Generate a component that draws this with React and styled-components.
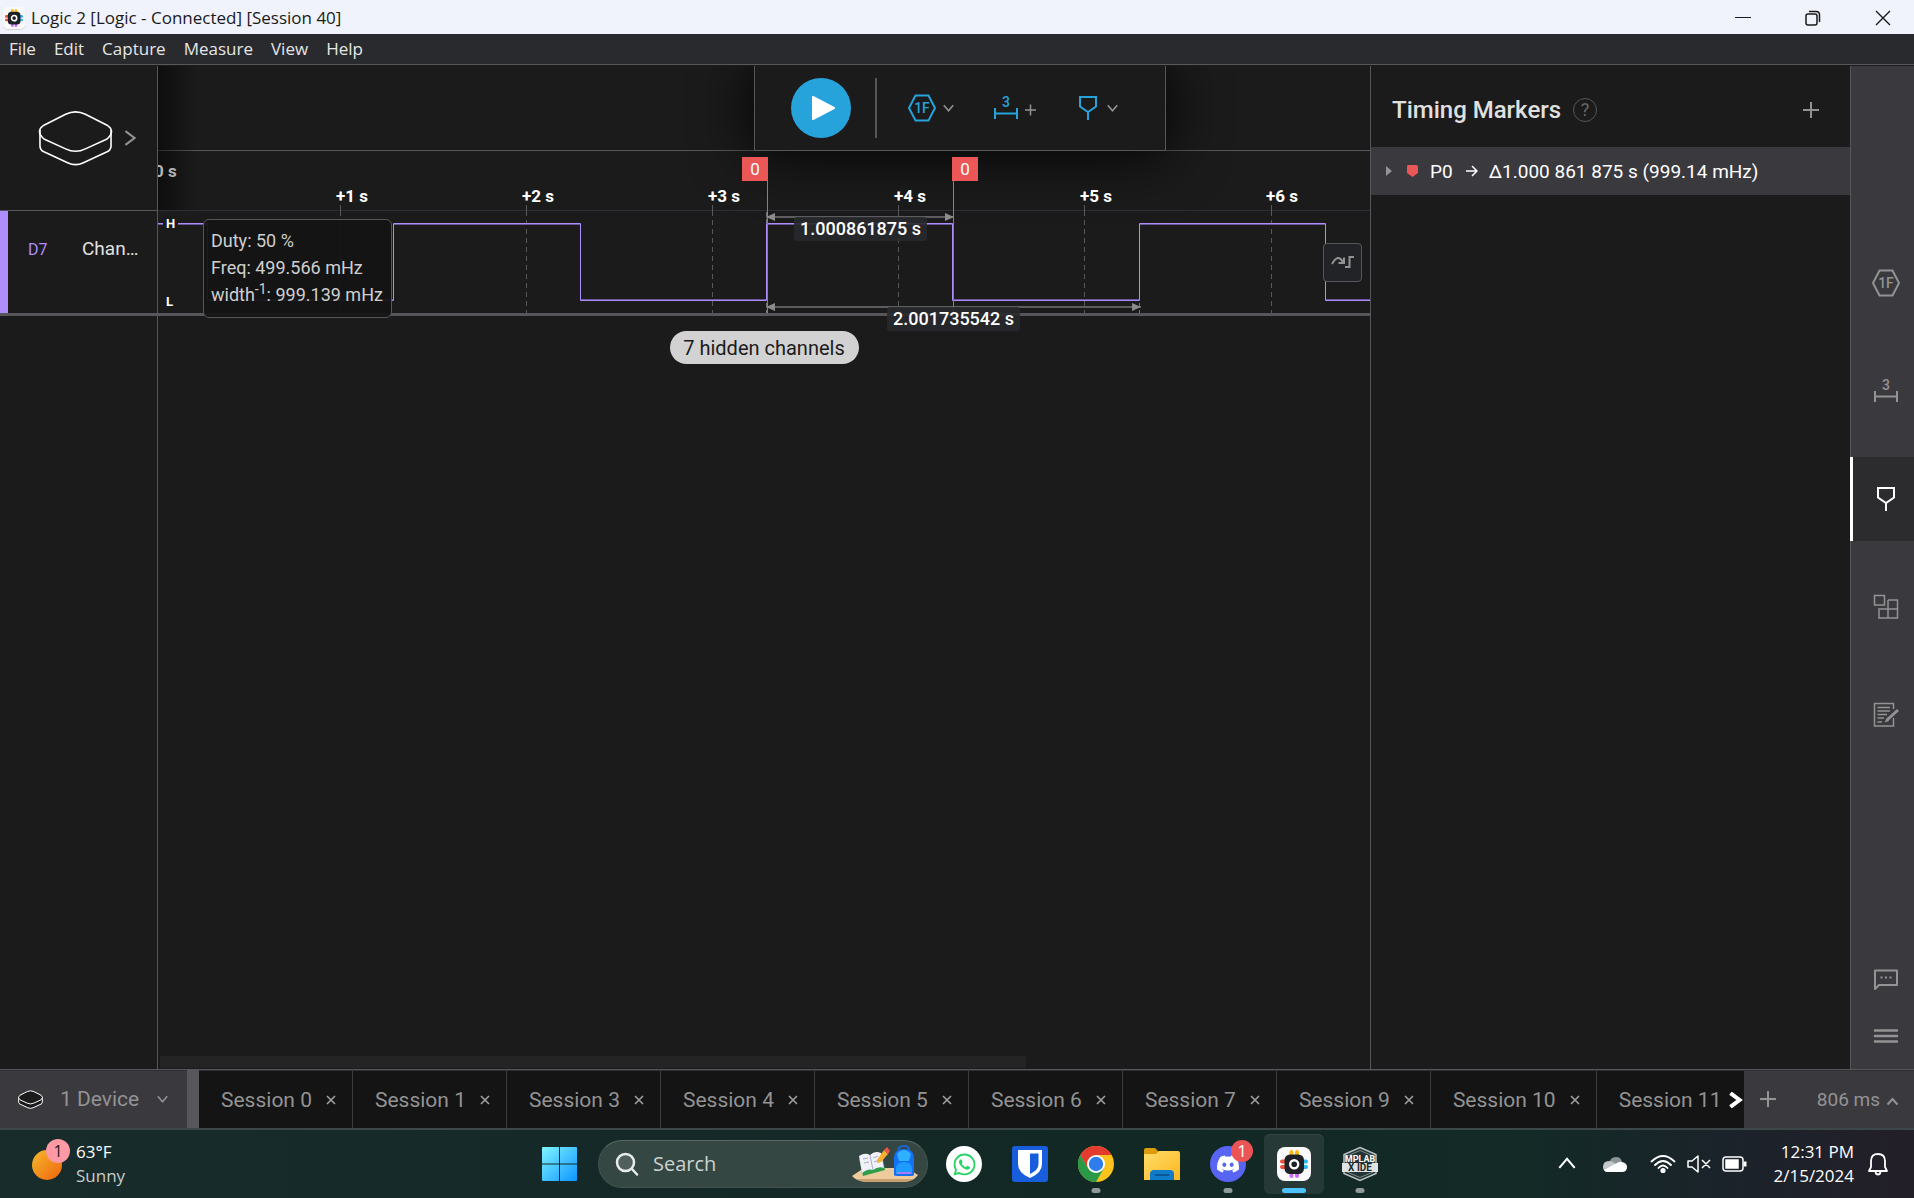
import React from "react";
import styled, { createGlobalStyle } from "styled-components";
import { FaDiscord, FaWhatsapp } from "react-icons/fa";

const c = {
  bg: "#1b1b1b",
  panel: "#3a393e",
  line: "#56565b",
  faint: "#2f2e36",
  grey: "#939393",
  blue: "#27a3dc",
  violet: "#ae8dfc",
  red: "#eb5757",
};

const ui = `Roboto, "Liberation Sans", sans-serif`;
const system = `"Open Sans", "Noto Sans", sans-serif`;

const Global = createGlobalStyle`
  *, *::before, *::after { box-sizing: border-box; }
  body { margin: 0; background: ${c.bg}; overflow: hidden; }
  button { border: 0; padding: 0; background: none; font: inherit; color: inherit; cursor: pointer; }
  svg { display: block; flex: none; }
`;

const Window = styled.div`
  height: 100vh;
  display: flex;
  flex-direction: column;
  font-family: ${ui};
  color: #fff;
  overflow: hidden;
`;

/* ---------- title and menu ---------- */

const TitleBar = styled.header`
  flex: none;
  height: 34px;
  display: flex;
  align-items: center;
  padding: 1px 0 0 3px;
  background: #f0f3fb;
  color: #1a1a1a;
  font: 17px/24px ${system};
`;

const AppIconFrame = styled.span`
  margin-right: 6px;
  border-radius: 5px;
  background: #fafafa;
  box-shadow: 0 1px 1px #cfd2d8;
`;

const WindowButtons = styled.div`
  margin-left: auto;
  display: flex;
  gap: 8px;
  height: 100%;
`;

const WindowButton = styled.button`
  width: 62px;
  display: grid;
  place-items: center;
`;

const MenuBar = styled.nav`
  flex: none;
  height: 31px;
  display: flex;
  align-items: center;
  gap: 18px;
  padding: 0 9px 1px;
  background: #292a2d;
  border-bottom: 1px solid ${c.line};
  color: #e6e6e6;
  font: 17px/24px ${system};
`;

/* ---------- main area ---------- */

const Main = styled.main`
  flex: 1;
  min-height: 0;
  display: flex;
  padding-top: 1px;
  background: ${c.bg};
`;

const Channels = styled.aside`
  flex: none;
  width: 158px;
  position: relative;
  z-index: 2;
  border-right: 1px solid ${c.line};
  background: ${c.bg};
`;

const DeviceButton = styled.button`
  width: 157px;
  height: 145px;
  display: flex;
  align-items: center;
  gap: 9px;
  padding-left: 38px;
  border-bottom: 1px solid ${c.line};
`;

const ChannelRow = styled.div`
  height: 105px;
  display: flex;
  align-items: baseline;
  padding: 24px 0 0 20px;
  border-bottom: 3px solid ${c.line};
  box-shadow: inset 8px 0 ${c.violet};
  font-size: 19px;
  line-height: 28px;
  color: #e0e0e0;
`;

const ChannelId = styled.span`
  width: 54px;
  margin-left: 8px;
  font-size: 16px;
  color: ${c.violet};
`;

const Graph = styled.section`
  flex: 1;
  min-width: 0;
  display: flex;
  flex-direction: column;
  position: relative;
  overflow: hidden;
`;

const SideShade = styled.div`
  position: absolute;
  z-index: 1;
  left: 0;
  top: 0;
  width: 40px;
  height: 144px;
  background: linear-gradient(90deg, rgba(0, 0, 0, 0.5), transparent);
  pointer-events: none;
`;

const GraphHeader = styled.div`
  flex: none;
  height: 85px;
  display: flex;
  justify-content: flex-end;
  padding-right: 204px;
  border-bottom: 1px solid ${c.line};
`;

const Toolbar = styled.div`
  height: 85px;
  width: 412px;
  display: flex;
  align-items: center;
  padding-left: 36px;
  border: 1px solid ${c.line};
  border-top: 0;
  background: ${c.bg};
  box-shadow: 0 0 60px #000;
`;

const PlayButton = styled.button`
  width: 60px;
  height: 60px;
  border-radius: 50%;
  background: ${c.blue};
  display: grid;
  place-items: center;
`;

const ToolDivider = styled.span`
  width: 2px;
  height: 60px;
  margin: 0 31px 0 24px;
  background: ${c.line};
`;

const Tools = styled.div`
  display: flex;
  gap: 40px;
`;

const ToolButton = styled.button`
  display: flex;
  align-items: center;
  gap: 7px;
  color: ${c.blue};
`;

const Ruler = styled.div`
  flex: none;
  height: 60px;
  display: flex;
  align-items: flex-end;
  padding: 0 0 4px 178px;
  border-bottom: 1px solid ${c.faint};
  position: relative;
  font-size: 17px;
  line-height: 20px;
  font-weight: 700;
  color: #fff;
`;

const Origin = styled.span`
  position: absolute;
  z-index: 1;
  left: -4px;
  top: 10px;
  color: #b4b4b4;
`;

const RulerLabel = styled.span`
  flex: none;
  width: 186px;
`;

const Trace = styled.div`
  flex: none;
  height: 105px;
  position: relative;
  border-bottom: 3px solid ${c.line};
`;

const TraceDrawing = styled.svg`
  position: absolute;
  left: 0;
  top: -6px;
`;

const Level = styled.span`
  position: absolute;
  left: 5px;
  top: ${(p) => p.$top}px;
  padding: 0 3px;
  background: ${c.bg};
  border-radius: 4px;
  font-size: 13px;
  line-height: 16px;
  font-weight: 700;
`;

const Flag = styled.span`
  position: absolute;
  z-index: 1;
  left: ${(p) => p.$x}px;
  top: 91px;
  width: 26px;
  height: 24px;
  background: ${c.red};
  text-align: center;
  font-size: 17px;
  line-height: 24px;
`;

const FlagLine = styled.span`
  position: absolute;
  left: ${(p) => p.$x}px;
  top: 91px;
  width: 1px;
  height: 156px;
  background: ${c.red};
`;

const Measure = styled.span`
  position: absolute;
  left: ${(p) => p.$x}px;
  top: ${(p) => p.$y}px;
  padding: 0 6px;
  border-radius: 3px;
  background: rgba(40, 41, 44, 0.9);
  font-size: 18px;
  line-height: 24px;
  font-weight: 500;
  white-space: nowrap;
`;

const Tooltip = styled.div`
  position: absolute;
  left: 45px;
  top: 8px;
  width: 189px;
  height: 99px;
  padding: 7px;
  border: 1px solid ${c.line};
  border-radius: 6px;
  background: rgba(20, 20, 20, 0.94);
  color: #cfcfcf;
  font-size: 18px;
  line-height: 27px;
  white-space: nowrap;

  p { margin: 0; }
  sup { font-size: 14px; line-height: 0; }
`;

const JumpButton = styled.button`
  position: absolute;
  right: 8px;
  top: 32px;
  width: 39px;
  height: 39px;
  display: grid;
  place-items: center;
  border: 1px solid ${c.line};
  border-radius: 4px;
  background: #222326;
`;

const HiddenChannels = styled.button`
  align-self: center;
  width: 189px;
  height: 33px;
  margin-top: 15px;
  border-radius: 17px;
  background: #d2d2d2;
  color: #1b1b1b;
  font-size: 20px;
  line-height: 32px;
`;

const ScrollThumb = styled.div`
  width: 866px;
  height: 12px;
  margin: auto 0 1px 2px;
  background: #242424;
`;

/* ---------- markers panel ---------- */

const Panel = styled.aside`
  flex: none;
  width: 480px;
  border-left: 1px solid ${c.line};
`;

const PanelHeader = styled.div`
  height: 81px;
  display: flex;
  align-items: center;
  gap: 12px;
  padding: 6px 31px 0 21px;

  h2 { margin: 0; font-size: 24px; line-height: 32px; font-weight: 500; color: #e0e0e0; }
`;

const HelpButton = styled.button`
  width: 24px;
  height: 24px;
  border: 1px solid ${c.line};
  border-radius: 50%;
  color: #68686c;
  font-size: 18px;
  line-height: 22px;
`;

const AddButton = styled.button`
  margin-left: auto;
`;

const MarkerRow = styled.div`
  height: 48px;
  display: flex;
  align-items: center;
  padding-left: 15px;
  background: ${c.panel};
  font-size: 19px;
  line-height: 22px;
  white-space: nowrap;

  span { padding-top: 2px; }
`;

const MarkerName = styled.span`
  margin: 0 13px 0 12px;
`;

const MarkerValue = styled.span`
  margin-left: 11px;
`;

const Rail = styled.nav`
  flex: none;
  width: 64px;
  display: flex;
  flex-direction: column;
  gap: 24px;
  padding-top: 175px;
  border-left: 1px solid ${c.line};
  background: ${c.panel};
  color: ${c.grey};
`;

const RailButton = styled.button`
  height: 84px;
  margin-left: -1px;
  padding-left: ${(p) => (p.$active ? 5 : 8)}px;
  display: grid;
  place-items: center;
  color: ${(p) => (p.$active ? "#fff" : c.grey)};
  background: ${(p) => (p.$active ? "#2c2c2f" : "transparent")};
  border-left: ${(p) => (p.$active ? "3px solid #fff" : "0")};
`;

const RailFoot = styled.div`
  margin: auto 0 25px 22px;
  display: flex;
  flex-direction: column;
  gap: 36px;
`;

/* ---------- session tabs ---------- */

const TabBar = styled.div`
  flex: none;
  height: 61px;
  display: flex;
  border-top: 1px solid ${c.line};
  border-bottom: 2px solid #3b4748;
  box-shadow: inset 0 1px #2e2e32;
  background: ${c.panel};
  color: ${c.grey};
  font-size: 21px;
`;

const DevicePicker = styled.button`
  flex: none;
  width: 199px;
  display: flex;
  align-items: center;
  padding-left: 18px;
  border-right: 12px solid ${c.line};

  span { margin: 0 18px 0 17px; }
`;

const Tabs = styled.div`
  flex: 1;
  min-width: 0;
  display: flex;
  margin-top: 1px;
  position: relative;
  overflow: hidden;
  background: #141414;
`;

const Tab = styled.div`
  flex: none;
  display: flex;
  align-items: center;
  gap: 14px;
  padding: 0 16px 0 22px;
  border-right: 1px solid #3d3d41;
`;

const NextTabs = styled.button`
  position: absolute;
  right: 0;
  top: 0;
  width: 18px;
  height: 100%;
  display: grid;
  place-items: center;
  background: #141414;
`;

const TabActions = styled.div`
  flex: none;
  width: 170px;
  display: flex;
  align-items: center;
  padding: 0 16px;
`;

const Latency = styled.button`
  margin-left: auto;
  display: flex;
  align-items: center;
  gap: 7px;
  font-size: 19px;
`;

/* ---------- taskbar ---------- */

const Taskbar = styled.footer`
  flex: none;
  height: 68px;
  display: grid;
  grid-template-columns: 1fr auto 1fr;
  align-items: center;
  padding-left: 6px;
  background: linear-gradient(90deg, #182c2b 0, #152a28 30%, #122824 62%, #132a27 80%, #1b232a 90%, #231f29 100%);
  font-family: ${system};
  font-size: 17px;
  line-height: 24px;
`;

const Weather = styled.button`
  justify-self: start;
  display: flex;
  align-items: center;
  gap: 6px;
  margin-left: 26px;
  text-align: left;

  svg { margin-bottom: 10px; }
  small { display: block; font-size: 17px; color: #c6cccb; }
`;

const Apps = styled.div`
  display: flex;
  align-items: center;
  gap: 6px;
`;

const AppButton = styled.button`
  width: 60px;
  height: 60px;
  position: relative;
  display: grid;
  place-items: center;
  border-radius: 6px;
  background: ${(p) => (p.$active ? "#263937" : "transparent")};
  box-shadow: ${(p) => (p.$active ? "inset 0 1px #344644" : "none")};

  &::after {
    content: "";
    display: ${(p) => (p.$open ? "block" : "none")};
    position: absolute;
    left: 50%;
    bottom: 1px;
    width: ${(p) => (p.$active ? 24 : 9)}px;
    height: 5px;
    border-radius: 3px;
    transform: translateX(-50%);
    background: ${(p) => (p.$active ? "#4cc2ff" : "#8f9997")};
  }
`;

const Disc = styled.span`
  width: 36px;
  height: 36px;
  display: grid;
  place-items: center;
  border-radius: 50%;
  background: ${(p) => p.$fill};
  color: ${(p) => p.$ink};
`;

const Badge = styled.span`
  position: absolute;
  right: 5px;
  top: 6px;
  width: 22px;
  height: 22px;
  border-radius: 50%;
  background: #ed5456;
  font-size: 17px;
  line-height: 22px;
  text-align: center;
`;

const SearchBox = styled.label`
  width: 330px;
  height: 48px;
  margin-left: 2px;
  display: flex;
  align-items: center;
  gap: 14px;
  padding: 0 8px 0 16px;
  border: 1px solid #43534f;
  border-top-color: #596865;
  border-radius: 24px;
  background: #344743;

  input {
    flex: 1;
    min-width: 0;
    padding: 0;
    border: 0;
    outline: 0;
    background: none;
    font: 20px/28px ${system};
  }
  input::placeholder { color: #ccd2d0; opacity: 1; }
`;

const Tray = styled.div`
  justify-self: end;
  display: flex;
  align-items: center;
  margin-right: 25px;
`;

const TrayIcons = styled.div`
  display: flex;
  align-items: center;
  gap: 11px;
`;

const TraySpread = styled.div`
  display: flex;
  align-items: center;
  gap: 26px;
  margin-right: 22px;
`;

const Clock = styled.button`
  margin: 0 13px 0 25px;
  text-align: right;
`;

/* ---------- icons ---------- */

const Chevron = ({ size = 10, dir = "down", color = c.grey, weight = 2 }) => {
  const d = {
    down: "M1 3 L7 10 L13 3",
    up: "M1 10 L7 3 L13 10",
    right: "M3 1 L11 7 L3 13",
  }[dir];
  return (
    <svg width={size} height={size} viewBox="0 0 14 14" fill="none" stroke={color} strokeWidth={weight}>
      <path d={d} />
    </svg>
  );
};

const Plus = ({ size = 16, weight = 2 }) => (
  <svg width={size} height={size} viewBox="0 0 16 16" stroke={c.grey} strokeWidth={weight}>
    <path d="M8 0V16M0 8H16" />
  </svg>
);

const SmallPlus = () => (
  <svg width="11" height="16" viewBox="0 0 11 16" stroke={c.grey} strokeWidth="1.5">
    <path d="M5.500 4.500V15.500M0 10H11" />
  </svg>
);

const LatencyCaret = () => (
  <svg width="11" height="16" viewBox="0 0 11 16" fill="none" stroke={c.grey} strokeWidth="2">
    <path d="M0.500 13.500L5.500 8L10.500 13.500" />
  </svg>
);

const Cross = () => (
  <svg width="10" height="10" viewBox="0 0 10 10" stroke="#a0a0a0" strokeWidth="1.6">
    <path d="M1 1L9 9M9 1L1 9" />
  </svg>
);

const AnalyzerIcon = () => (
  <svg width="28" height="28" viewBox="1 0 28 28">
    <path d="M8.500 1.500H21.500L28 14L21.500 26.500H8.500L2 14Z" fill="none" stroke="currentColor" strokeWidth="2" />
    <text x="15" y="19" fontSize="14" fontWeight="500" textAnchor="middle" fill="currentColor" fontFamily="Roboto">1F</text>
  </svg>
);

const MeasureIcon = () => (
  <svg width="24" height="26" viewBox="0 0 24 26">
    <path d="M1 13V24M23 13V24M1 18.500H23" fill="none" stroke="currentColor" strokeWidth="2" />
    <text x="12" y="12" fontSize="14" fontWeight="500" textAnchor="middle" fill="currentColor" fontFamily="Roboto">3</text>
  </svg>
);

const MarkerIcon = () => (
  <svg width="24" height="26" viewBox="0 0 24 26" fill="none" stroke="currentColor" strokeWidth="2">
    <path d="M4 2H20V11.500L12 17L4 11.500ZM12 17V25" />
  </svg>
);

const ExtensionsIcon = () => (
  <svg width="26" height="26" viewBox="0 0 26 26" fill="none" stroke="currentColor" strokeWidth="1.500">
    <path d="M1.500 1.500H11.500V11H1.500ZM15 6H24.500V24H6V15H24.500M15 6V24" />
  </svg>
);

const NotesIcon = () => (
  <svg width="26" height="26" viewBox="0 0 26 26" fill="none" stroke="currentColor" strokeWidth="1.500">
    <path d="M20.500 7V1.500H1.500V24H20.500V16M4.500 5.500H17M4.500 9H17M4.500 12.500H14M4.500 16H11M4.500 20H9" />
    <path d="M25 8L14 18" strokeWidth="3" />
    <path d="M14 16L11.500 20.500L16 19Z" fill="currentColor" stroke="none" />
  </svg>
);

const ChatIcon = () => (
  <svg width="26" height="24" viewBox="0 0 26 24" fill="none" stroke="currentColor" strokeWidth="2">
    <path d="M2 21V2.500H24V17H6Z" strokeLinejoin="round" />
    <path d="M7.500 9.500H9.500M12 9.500H14M16.500 9.500H18.500" />
  </svg>
);

const BurgerIcon = () => (
  <svg width="26" height="16" viewBox="0 0 26 16" stroke="currentColor" strokeWidth="2.500" strokeLinecap="round">
    <path d="M2 2.500H24M2 8H24M2 13.500H24" />
  </svg>
);

const DeviceIcon = ({ width, weight, fill = "none" }) => (
  <svg width={width} height={Math.round(width * 0.74)} viewBox="0 0 76 56" fill={fill} stroke="#fff" strokeWidth={weight} strokeLinejoin="round">
    <path d="M2 20V36Q2 40 6 42L30 53Q38 57 46 53L70 42Q74 40 74 36V20" />
    <path d="M6 15L28 4Q38 -1 48 4L70 15Q79 21 70 29L48 39Q38 44 28 39L6 29Q-3 21 6 15Z" />
  </svg>
);

const LogicIcon = ({ size }) => (
  <svg width={size} height={size} viewBox="0 0 34 34">
    <rect width="34" height="34" rx="8" fill="#fafafc" />
    <g strokeWidth="4" strokeLinecap="round">
      <path d="M14.500 5V10M20 5V10" stroke="#fdbb11" />
      <path d="M14.500 24V29M20 24V29" stroke="#c86bfa" />
      <path d="M5 14.500H10M5 20H10" stroke="#f0503c" />
      <path d="M24 14.500H29M24 20H29" stroke="#2ab7f5" />
    </g>
    <rect x="7.500" y="7.500" width="19.500" height="19.500" rx="5.500" fill="#1d2024" />
    <circle cx="17.200" cy="17.200" r="4" fill="none" stroke="#fff" strokeWidth="2.400" />
  </svg>
);

const ChromeIcon = () => (
  <svg width="36" height="36" viewBox="0 0 36 36">
    <circle cx="18" cy="18" r="18" fill="#fcc31e" />
    <path d="M18 9H33.600A18 18 0 0 0 2.400 9L10.200 22.500Z" fill="#e33b2e" />
    <path d="M2.400 9A18 18 0 0 0 18 36L25.800 22.500L10.200 22.500Z" fill="#2a9a48" />
    <circle cx="18" cy="18" r="9" fill="#fff" />
    <circle cx="18" cy="18" r="7.200" fill="#2f7ceb" />
  </svg>
);

const BitwardenIcon = () => (
  <svg width="36" height="36" viewBox="0 0 36 36">
    <rect width="36" height="36" rx="3" fill="#175ddc" />
    <path d="M6 4H30V18Q30 27 18 32Q6 27 6 18Z" fill="#fff" />
    <path d="M18 7.500H26.500V18Q26.500 24 18 28Z" fill="#175ddc" />
  </svg>
);

const FolderIcon = () => (
  <svg width="36" height="34" viewBox="0 0 36 34">
    <defs>
      <linearGradient id="folder" x2="1" y2="1">
        <stop stopColor="#ffdc6b" />
        <stop offset="1" stopColor="#fcb81e" />
      </linearGradient>
    </defs>
    <path d="M0 3Q0 1 2 1H11L15 5V10H0Z" fill="#dd9a0c" />
    <path d="M0 7H12L15 4H34Q36 4 36 6V33H0Z" fill="url(#folder)" />
    <path d="M6 33V27Q6 23 10 23H26Q30 23 30 27V33Z" fill="#0f7bc9" />
    <path d="M11 28H25" stroke="#0a5592" strokeWidth="2" />
  </svg>
);

const MplabIcon = () => (
  <svg width="38" height="36" viewBox="0 0 38 36" fontFamily="Roboto" fontWeight="700" textAnchor="middle" fill="#fff">
    <path d="M19 1.500L35 8.500V27.500L19 34.500L3 27.500V8.500Z" fill="#243436" stroke="#b9c1c1" strokeWidth="1.500" />
    <path d="M19 4.500L32 10V26L19 31.500L6 26V10Z" fill="none" stroke="#78898c" />
    <rect x="1" y="17" width="36" height="9" fill="#dfe3e3" />
    <text x="19" y="15.500" fontSize="9">MPLAB</text>
    <text x="19" y="25" fontSize="10" fill="#1c2b2c">X IDE</text>
  </svg>
);

const StartIcon = () => (
  <svg width="36" height="36" viewBox="0 0 36 36">
    <defs>
      <linearGradient id="start" x2="36" y2="36" gradientUnits="userSpaceOnUse">
        <stop stopColor="#81f5ff" />
        <stop offset="1" stopColor="#0a93ff" />
      </linearGradient>
    </defs>
    <path d="M0 2Q0 1 1 1H17V17.500H0ZM18 1H34Q35 1 35 2V17.500H18ZM0 18.500H17V35H1Q0 35 0 34ZM18 18.500H35V34Q35 35 34 35H18Z" fill="url(#start)" />
  </svg>
);

const SearchArt = () => (
  <svg width="68" height="38" viewBox="0 0 68 38">
    <path d="M1 31L13 23H56L67 30Q62 37 52 37H15Q5 36 1 31Z" fill="#eecb9c" />
    <path d="M5 34Q10 37 15 37H52Q58 37 63 34Z" fill="#c9a06f" />
    <path d="M8 14L31 8L34 25L12 31Z" fill="#2f9e4a" />
    <path d="M8 11Q14 7 19 10Q24 5 30 8L33 23Q27 21 22 25Q17 23 11 28Z" fill="#f1f1fa" />
    <path d="M19 10L22 25M12 14L17 13M13 18L18 17M22 13L27 11M23 17L28 15" stroke="#a9a9cd" />
    <path d="M26 15L33 5L37 9L30 17L26 18Z" fill="#f9b02e" />
    <path d="M33 5L36 2L39 6L37 9Z" fill="#f0564a" />
    <path d="M47 5Q48 1 53 1Q58 1 58 5" fill="none" stroke="#1c64d6" strokeWidth="2" />
    <path d="M43 30V13Q43 4 53 4Q63 4 63 13V30Q63 31 60 31H46Q43 31 43 30Z" fill="#1570f2" />
    <path d="M46 9Q53 1 60 9L58 16H48Z" fill="#2fb1ff" />
    <path d="M45 29V23Q46 17 53 17Q60 17 61 23V29Z" fill="#1e9bff" />
    <path d="M46 28H60" stroke="#a97bff" strokeWidth="2" />
  </svg>
);

const WeatherIcon = () => (
  <svg width="38" height="42" viewBox="0 0 38 42">
    <defs>
      <linearGradient id="sun" x2="1" y2="1">
        <stop stopColor="#f5b92b" />
        <stop offset="1" stopColor="#f0640e" />
      </linearGradient>
    </defs>
    <circle cx="15" cy="27" r="15" fill="url(#sun)" />
    <circle cx="26" cy="13" r="12" fill="#ff99a4" />
    <text x="26" y="19" fontSize="16" textAnchor="middle" fill="#1b1b1b" fontFamily="Open Sans">1</text>
  </svg>
);

/* ---------- waveform ---------- */

const edges = [49, 235, 422, 608, 794, 981, 1167];
const gridXs = [182, 368, 554, 740, 926, 1113];

const wavePath = () => {
  let high = true;
  let d = "M0 18.500";
  edges.forEach((x) => {
    d += `H${x + 0.5}V${high ? 95.5 : 18.5}`;
    high = !high;
  });
  return `${d}H4000`;
};

const Arrow = ({ from, to, y }) => (
  <g fill="#8b8b8b">
    <rect x={from} y={y - 1} width={to - from} height="2" fill="#5d5d5f" />
    <path d={`M${from} ${y}l9 -4v8zM${to} ${y}l-9 -4v8z`} />
  </g>
);

const Waveform = () => (
  <TraceDrawing width="100%" height="108" aria-hidden="true">
    {gridXs.map((x) => (
      <g key={x} stroke="#58585c">
        <path d={`M${x + 0.5} 0V11`} />
        <path d={`M${x + 0.5} 15V108`} strokeDasharray="5 4" />
      </g>
    ))}
    <path d="M608.500 7V20M795.500 7V20M608.500 98V108M981.500 98V108" stroke="#77777a" strokeDasharray="4 3" />
    {[[0, 49], [235, 422], [608, 794], [981, 1167]].map(([a, b]) => (
      <rect key={a} x={a} y="19" width={b - a} height="1" fill="#6b589b" />
    ))}
    {[[49, 235], [422, 608], [794, 981], [1167, 4000]].map(([a, b]) => (
      <rect key={a} x={a} y="94" width={b - a} height="1" fill="#6b589b" />
    ))}
    <path d={wavePath()} fill="none" stroke={c.violet} />
    <Arrow from={608} to={796} y={12} />
    <Arrow from={608} to={983} y={102} />
  </TraceDrawing>
);

const sessions = [0, 1, 3, 4, 5, 6, 7, 9, 10, 11];

export default function App() {
  return (
    <Window>
      <Global />
      <TitleBar>
        <AppIconFrame><LogicIcon size={22} /></AppIconFrame>
        Logic 2 [Logic - Connected] [Session 40]
        <WindowButtons>
          <WindowButton aria-label="Minimize">
            <svg width="16" height="16" viewBox="0 0 16 16" stroke="#1a1a1a"><path d="M0 7.500H16" /></svg>
          </WindowButton>
          <WindowButton aria-label="Restore">
            <svg width="16" height="16" viewBox="0 0 16 16" fill="none" stroke="#1a1a1a" strokeWidth="1.500">
              <rect x="1" y="4" width="11" height="11" rx="2" />
              <path d="M4 1.500H11Q14.500 1.500 14.500 5V12" />
            </svg>
          </WindowButton>
          <WindowButton aria-label="Close">
            <svg width="16" height="16" viewBox="0 0 16 16" stroke="#1a1a1a" strokeWidth="1.400"><path d="M1 1L15 15M15 1L1 15" /></svg>
          </WindowButton>
        </WindowButtons>
      </TitleBar>
      <MenuBar>
        {["File", "Edit", "Capture", "Measure", "View", "Help"].map((m) => <button key={m}>{m}</button>)}
      </MenuBar>

      <Main>
        <Channels>
          <DeviceButton aria-label="Device">
            <DeviceIcon width={75} weight={1.6} />
            <Chevron dir="right" size={16} weight={1.8} />
          </DeviceButton>
          <ChannelRow><ChannelId>D7</ChannelId>Chan…</ChannelRow>
        </Channels>

        <Graph>
          <SideShade />
          <GraphHeader>
            <Toolbar>
              <PlayButton aria-label="Start capture">
                <svg width="28" height="28" viewBox="0 0 28 28" fill="#fff" stroke="#fff" strokeWidth="2" strokeLinejoin="round">
                  <path d="M6 3L27 14L6 25Z" />
                </svg>
              </PlayButton>
              <ToolDivider />
              <Tools>
                <ToolButton aria-label="Add analyzer"><AnalyzerIcon /><Chevron size={11} /></ToolButton>
                <ToolButton aria-label="Add measurement"><MeasureIcon /><SmallPlus /></ToolButton>
                <ToolButton aria-label="Add marker"><MarkerIcon /><Chevron size={11} /></ToolButton>
              </Tools>
            </Toolbar>
          </GraphHeader>
          <Ruler>
            <Origin>0 s</Origin>
            {[1, 2, 3, 4, 5, 6].map((n) => <RulerLabel key={n}>+{n} s</RulerLabel>)}
          </Ruler>
          <Trace>
            <Waveform />
            <Level $top={5}>H</Level>
            <Level $top={83}>L</Level>
            <Tooltip>
              <p>Duty: 50 %</p>
              <p>Freq: 499.566 mHz</p>
              <p>width<sup>-1</sup>: 999.139 mHz</p>
            </Tooltip>
            <JumpButton aria-label="Jump to next edge">
              <svg width="24" height="16" viewBox="0 0 24 16" fill="none" stroke={c.grey} strokeWidth="2">
                <path d="M1 9Q7 -2 12 7M7.500 8H13V2.500M14 12H18.500V2H23" />
              </svg>
            </JumpButton>
          </Trace>
          <FlagLine $x={609} />
          <FlagLine $x={795} />
          <Flag $x={584}>0</Flag>
          <Flag $x={794}>0</Flag>
          <Measure $x={636} $y={151}>1.000861875 s</Measure>
          <Measure $x={729} $y={241}>2.001735542 s</Measure>
          <HiddenChannels>7 hidden channels</HiddenChannels>
          <ScrollThumb />
        </Graph>

        <Panel>
          <PanelHeader>
            <h2>Timing Markers</h2>
            <HelpButton aria-label="Help">?</HelpButton>
            <AddButton aria-label="Add marker"><Plus /></AddButton>
          </PanelHeader>
          <MarkerRow>
            <svg width="6" height="10" viewBox="0 0 6 10"><path d="M0 0L6 5L0 10Z" fill={c.grey} /></svg>
            <svg width="26" height="12" viewBox="1 0 26 12">
              <path d="M17 0H25Q27 0 27 2V8L21.500 12L16 8V1Z" fill={c.red} />
            </svg>
            <MarkerName>P0</MarkerName>
            <svg width="12" height="12" viewBox="0 0 12 12" fill="none" stroke="#fff" strokeWidth="1.500"><path d="M0 6H11M6 1L11 6L6 11" /></svg>
            <MarkerValue>Δ1.000 861 875 s (999.14 mHz)</MarkerValue>
          </MarkerRow>
        </Panel>

        <Rail>
          <RailButton aria-label="Analyzers"><AnalyzerIcon /></RailButton>
          <RailButton aria-label="Measurements"><MeasureIcon /></RailButton>
          <RailButton aria-label="Timing markers" $active><MarkerIcon /></RailButton>
          <RailButton aria-label="Extensions"><ExtensionsIcon /></RailButton>
          <RailButton aria-label="Notes"><NotesIcon /></RailButton>
          <RailFoot>
            <button aria-label="Feedback"><ChatIcon /></button>
            <button aria-label="Main menu"><BurgerIcon /></button>
          </RailFoot>
        </Rail>
      </Main>

      <TabBar>
        <DevicePicker>
          <DeviceIcon width={25} weight={3} fill="#1b1b1b" />
          <span>1 Device</span>
          <Chevron size={11} />
        </DevicePicker>
        <Tabs>
          {sessions.map((n) => (
            <Tab key={n}>
              <span>Session {n}</span>
              <button aria-label={`Close session ${n}`}><Cross /></button>
            </Tab>
          ))}
          <NextTabs aria-label="More sessions"><Chevron dir="right" size={16} color="#fff" weight={3.5} /></NextTabs>
        </Tabs>
        <TabActions>
          <button aria-label="New session"><Plus /></button>
          <Latency>806 ms<LatencyCaret /></Latency>
        </TabActions>
      </TabBar>

      <Taskbar>
        <Weather>
          <WeatherIcon />
          <span>63°F<small>Sunny</small></span>
        </Weather>
        <Apps>
          <AppButton aria-label="Start"><StartIcon /></AppButton>
          <SearchBox>
            <svg width="24" height="24" viewBox="0 0 24 24" fill="#50605d" stroke="#e9ecec" strokeWidth="2.500" strokeLinecap="round">
              <circle cx="10.500" cy="10.500" r="8.500" /><path d="M17 17L22 22.500" />
            </svg>
            <input type="text" placeholder="Search" aria-label="Search" />
            <SearchArt />
          </SearchBox>
          <AppButton aria-label="WhatsApp"><Disc $fill="#fff" $ink="#25d366"><FaWhatsapp size={25} /></Disc></AppButton>
          <AppButton aria-label="Bitwarden"><BitwardenIcon /></AppButton>
          <AppButton aria-label="Chrome" $open><ChromeIcon /></AppButton>
          <AppButton aria-label="File Explorer"><FolderIcon /></AppButton>
          <AppButton aria-label="Discord" $open>
            <Disc $fill="#5865f2" $ink="#fff"><FaDiscord size={24} /></Disc>
            <Badge>1</Badge>
          </AppButton>
          <AppButton aria-label="Logic 2" $open $active><LogicIcon size={34} /></AppButton>
          <AppButton aria-label="MPLAB X IDE" $open><MplabIcon /></AppButton>
        </Apps>
        <Tray>
          <TraySpread>
            <button aria-label="Show hidden icons"><Chevron dir="up" size={18} color="#fff" weight={1.6} /></button>
            <svg width="26" height="18" viewBox="0 0 26 18">
              <path d="M7 9Q8 2 14 2Q19 2 20 7L12 13Z" fill="#8d9594" />
              <path d="M1 12Q1 6 7 6Q10 6 14 9L6 17Q1 17 1 12Z" fill="#c3c8c8" />
              <path d="M2 15L15 8Q18 6 20 7Q25 8 25 12Q25 17 20 17H6Q3 17 2 15Z" fill="#fff" />
            </svg>
          </TraySpread>
          <TrayIcons>
            <svg width="26" height="20" viewBox="0 0 26 20" fill="none" stroke="#fff" strokeWidth="1.800" strokeLinecap="round">
              <path d="M1.500 7.500Q13 -3.500 24.500 7.500M5 11Q13 3 21 11M8.500 14Q13 9 17.500 14" />
              <circle cx="13" cy="16.500" r="1.700" fill="#fff" />
            </svg>
            <svg width="24" height="20" viewBox="0 0 24 20" fill="none" stroke="#fff" strokeWidth="1.500" strokeLinejoin="round">
              <path d="M1 7V13H5L11 18V2L5 7ZM15 6L23 14M23 6L15 14" />
            </svg>
            <svg width="26" height="18" viewBox="0 0 26 18" fill="none" stroke="#fff" strokeWidth="1.500">
              <rect x="1" y="2" width="20" height="14" rx="3" />
              <rect x="4" y="5" width="12" height="8" fill="#fff" />
              <path d="M23 6.500V11.500" strokeWidth="3" />
            </svg>
          </TrayIcons>
          <Clock>12:31 PM<br />2/15/2024</Clock>
          <svg width="22" height="24" viewBox="0 0 22 24" fill="none" stroke="#fff" strokeWidth="1.800" strokeLinejoin="round">
            <path d="M4 15V9Q4 2 11 2Q18 2 18 9V15L20 19H2ZM8.500 20Q9 22.500 11 22.500Q13 22.500 13.500 20" />
          </svg>
        </Tray>
      </Taskbar>
    </Window>
  );
}
